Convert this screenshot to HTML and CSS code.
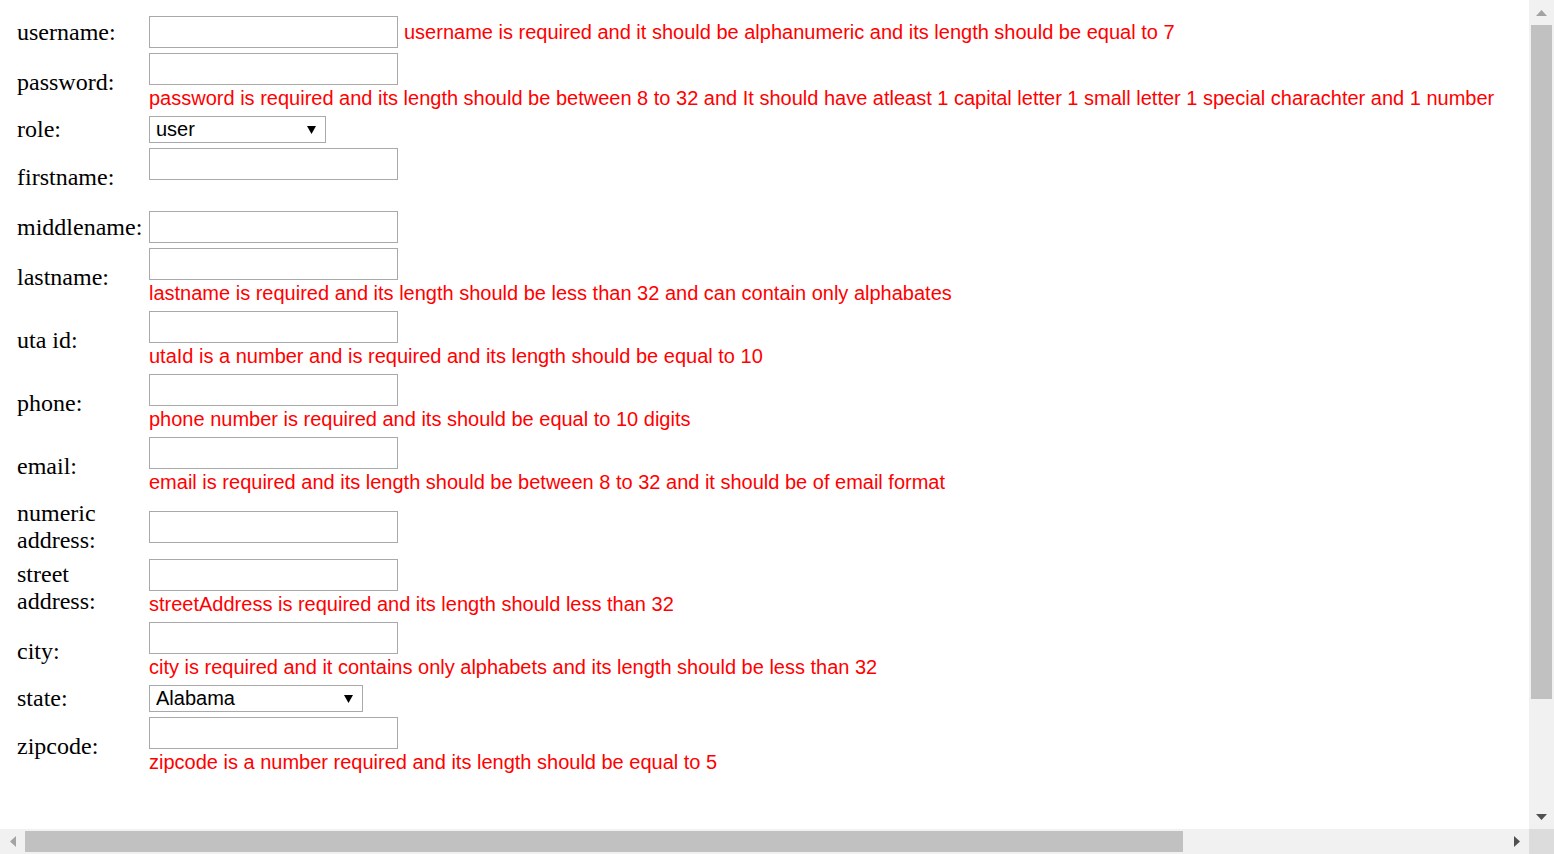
FILE: index.html
```html
<!DOCTYPE html>
<html lang="en">
<head>
<meta charset="utf-8">
<title>Registration</title>
<link rel="stylesheet" href="styles.css">
</head>
<body>
<div class="window">
  <div class="viewport">
    <form class="form">
      <label class="label">username:</label>
      <div class="field inline">
        <input class="text" type="text">
        <span class="error">username is required and it should be alphanumeric and its length should be equal to 7</span>
      </div>

      <label class="label">password:</label>
      <div class="field">
        <input class="text" type="password">
        <div class="error">password is required and its length should be between 8 to 32 and It should have atleast 1 capital letter 1 small letter 1 special charachter and 1 number</div>
      </div>

      <label class="label">role:</label>
      <div class="field">
        <span class="selectwrap role">
          <select class="select"><option>user</option><option>admin</option></select>
          <svg class="caret" width="9" height="8" viewBox="0 0 9 8"><polygon points="0,0 9,0 4.5,8" fill="#000"/></svg>
        </span>
      </div>

      <label class="label">firstname:</label>
      <div class="field">
        <input class="text" type="text">
        <div class="error">&nbsp;</div>
      </div>

      <label class="label">middlename:</label>
      <div class="field">
        <input class="text" type="text">
      </div>

      <label class="label">lastname:</label>
      <div class="field">
        <input class="text" type="text">
        <div class="error">lastname is required and its length should be less than 32 and can contain only alphabates</div>
      </div>

      <label class="label">uta id:</label>
      <div class="field">
        <input class="text" type="text">
        <div class="error">utaId is a number and is required and its length should be equal to 10</div>
      </div>

      <label class="label">phone:</label>
      <div class="field">
        <input class="text" type="text">
        <div class="error">phone number is required and its should be equal to 10 digits</div>
      </div>

      <label class="label">email:</label>
      <div class="field">
        <input class="text" type="text">
        <div class="error">email is required and its length should be between 8 to 32 and it should be of email format</div>
      </div>

      <label class="label">numeric address:</label>
      <div class="field">
        <input class="text" type="text">
      </div>

      <label class="label">street address:</label>
      <div class="field">
        <input class="text" type="text">
        <div class="error">streetAddress is required and its length should less than 32</div>
      </div>

      <label class="label">city:</label>
      <div class="field">
        <input class="text" type="text">
        <div class="error">city is required and it contains only alphabets and its length should be less than 32</div>
      </div>

      <label class="label">state:</label>
      <div class="field">
        <span class="selectwrap state">
          <select class="select"><option>Alabama</option><option>Alaska</option><option>Arizona</option></select>
          <svg class="caret" width="9" height="8" viewBox="0 0 9 8"><polygon points="0,0 9,0 4.5,8" fill="#000"/></svg>
        </span>
      </div>

      <label class="label">zipcode:</label>
      <div class="field">
        <input class="text" type="text">
        <div class="error">zipcode is a number required and its length should be equal to 5</div>
      </div>
    </form>
  </div>

  <div class="vscroll">
    <div class="sbtn">
      <svg width="11" height="6" viewBox="0 0 11 6"><polygon points="5.5,0 11,6 0,6" fill="#a3a3a3"/></svg>
    </div>
    <div class="vtrack"><div class="vthumb"></div></div>
    <div class="sbtn">
      <svg width="11" height="6" viewBox="0 0 11 6"><polygon points="0,0 11,0 5.5,6" fill="#505050"/></svg>
    </div>
  </div>

  <div class="hscroll">
    <div class="sbtn">
      <svg width="6" height="11" viewBox="0 0 6 11"><polygon points="6,0 6,11 0,5.5" fill="#a3a3a3"/></svg>
    </div>
    <div class="htrack"><div class="hthumb"></div></div>
    <div class="sbtn">
      <svg width="6" height="11" viewBox="0 0 6 11"><polygon points="0,0 6,5.5 0,11" fill="#505050"/></svg>
    </div>
  </div>

  <div class="corner"></div>
</div>
</body>
</html>
```

FILE: styles.css
```css
html, body {
  margin: 0;
  padding: 0;
  background: #fff;
}

.window {
  display: grid;
  grid-template-columns: 1529px 25px;
  grid-template-rows: 829px 25px;
  width: 1554px;
  height: 854px;
  overflow: hidden;
}

.viewport {
  overflow: hidden;
  background: #fff;
}

.form {
  display: grid;
  grid-template-columns: 128px max-content;
  column-gap: 4px;
  row-gap: 5px;
  align-items: center;
  padding: 16px 0 0 17px;
  margin: 0;
}

.label {
  font-family: "Liberation Serif", "Times New Roman", serif;
  font-size: 24px;
  line-height: 27px;
  color: #000;
}

.field {
  display: flex;
  flex-direction: column;
  align-items: flex-start;
}

.field.inline {
  flex-direction: row;
  align-items: center;
  gap: 6px;
}

.text {
  box-sizing: border-box;
  width: 249px;
  height: 32px;
  margin: 0;
  padding: 0 6px;
  border: 1px solid #a9a9a9;
  background: #fff;
  font-family: "Liberation Sans", Arial, sans-serif;
  font-size: 20px;
  outline: none;
}

.error {
  font-family: "Liberation Sans", Arial, sans-serif;
  font-size: 20px;
  line-height: 26px;
  color: #ff0000;
  white-space: nowrap;
}

.selectwrap {
  display: inline-grid;
  align-items: center;
}

.selectwrap.role { width: 177px; }
.selectwrap.state { width: 214px; }

.select {
  grid-area: 1 / 1;
  -webkit-appearance: none;
  appearance: none;
  box-sizing: border-box;
  width: 100%;
  height: 27px;
  margin: 0;
  padding: 0 0 0 6px;
  border: 1px solid #a9a9a9;
  border-radius: 0;
  background: #fff;
  color: #000;
  font-family: "Liberation Sans", Arial, sans-serif;
  font-size: 20px;
  line-height: 25px;
}

.caret {
  grid-area: 1 / 1;
  justify-self: end;
  align-self: center;
  margin-right: 10px;
  pointer-events: none;
}

.vscroll {
  display: flex;
  flex-direction: column;
  background: #f1f1f1;
}

.hscroll {
  display: flex;
  flex-direction: row;
  background: #f1f1f1;
}

.sbtn {
  flex: 0 0 25px;
  display: flex;
  align-items: center;
  justify-content: center;
}

.vtrack {
  flex: 1;
  display: flex;
  flex-direction: column;
  padding: 0 2px;
}

.vthumb {
  height: 674px;
  background: #c1c1c1;
}

.htrack {
  flex: 1;
  display: flex;
  flex-direction: row;
  padding: 2px 0;
}

.hthumb {
  width: 1158px;
  background: #c1c1c1;
}

.corner {
  background: #dcdcdc;
}
```
